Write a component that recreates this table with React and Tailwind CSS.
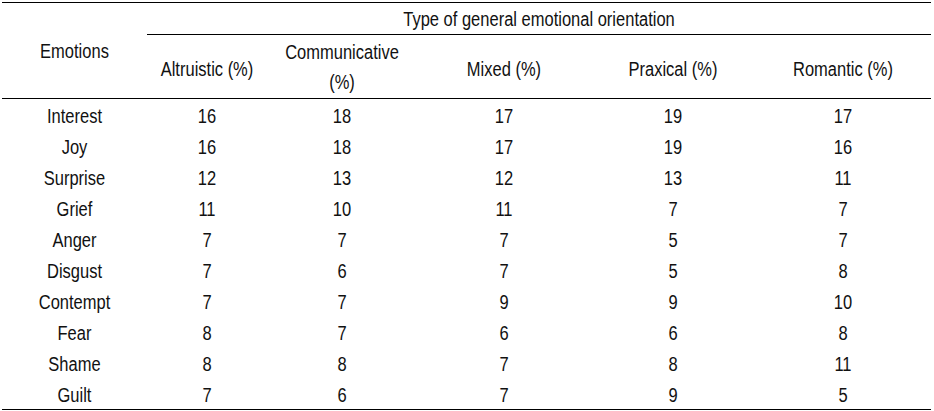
import React from 'react';

const COLS = [
  { id: 'altruistic', label: 'Altruistic (%)', width: 'w-[120px]' },
  { id: 'communicative', label: 'Communicative (%)', width: 'w-[150px]', wrap: true },
  { id: 'mixed', label: 'Mixed (%)', width: 'w-[174px]' },
  { id: 'praxical', label: 'Praxical (%)', width: 'w-[164px]' },
  { id: 'romantic', label: 'Romantic (%)', width: 'flex-1' },
];

const ROWS = [
  ['Interest', 16, 18, 17, 19, 17],
  ['Joy', 16, 18, 17, 19, 16],
  ['Surprise', 12, 13, 12, 13, 11],
  ['Grief', 11, 10, 11, 7, 7],
  ['Anger', 7, 7, 7, 5, 7],
  ['Disgust', 7, 6, 7, 5, 8],
  ['Contempt', 7, 7, 9, 9, 10],
  ['Fear', 8, 7, 6, 6, 8],
  ['Shame', 8, 8, 7, 8, 11],
  ['Guilt', 7, 6, 7, 9, 5],
];

// the source text is a little taller than plain Arial, so stretch it a bit
const T = ({ children }) => <span className="inline-block scale-y-[1.17]">{children}</span>;

export default function App() {
  return (
    <div className="w-[934px] h-[411px] bg-white text-[#111] font-['Liberation_Sans',Arial,sans-serif] text-[16.5px]">
      <div className="ml-[2px] pt-[2px] w-[929px]">
        <div className="border-t border-b border-black">
          {/* header */}
          <div className="flex border-b border-black">
            <div className="w-[145px] flex items-center justify-center pt-[2px]"><T>Emotions</T></div>
            <div className="flex-1 flex flex-col">
              <div className="h-[32px] border-b border-black flex items-center justify-center pt-[1px]">
                <T>Type of general emotional orientation</T>
              </div>
              <div className="h-[63px] flex pt-[6px]">
                {COLS.map(col => (
                  <div key={col.id} className={`${col.width} flex items-center justify-center text-center`}>
                    {col.wrap ? (
                      <span className="leading-[30px] flex flex-col items-center -mt-[5px]"><T>Communicative</T><T>(%)</T></span>
                    ) : <T>{col.label}</T>}
                  </div>
                ))}
              </div>
            </div>
          </div>

          {/* body */}
          {ROWS.map(row => (
            <div key={row[0]} className="flex h-[31px] items-center pt-[3px]">
              <div className="w-[145px] text-center"><T>{row[0]}</T></div>
              {COLS.map((col, i) => (
                <div key={col.id} className={`${col.width} text-center`}><T>{row[i + 1]}</T></div>
              ))}
            </div>
          ))}
        </div>
      </div>
    </div>
  );
}
